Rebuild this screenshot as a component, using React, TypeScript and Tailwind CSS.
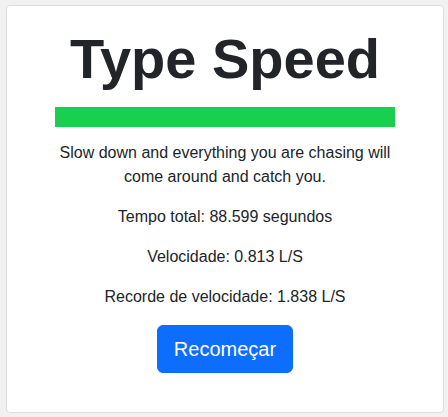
export default function App() {
  return (
    <div className="min-h-[417px] bg-[#f1f1f1] pl-[6px] pr-[4px] pt-[5px] pb-[4px] font-['Liberation_Sans',Arial,sans-serif] text-[#212529]">
      <div className="flex h-[408px] flex-col items-center rounded-[4px] border border-[#dedede] bg-white pt-[19px]">
        <h1 className="text-[56px] font-bold leading-[67px]">Type Speed</h1>
        <div className="mt-[15px] h-[20px] w-[340px] bg-[#19cf50]" />
        <div className="mt-[14px] w-[340px] text-center text-[16px] leading-[24px]">
          <p className="mb-[16px]">
            Slow down and everything you are chasing will come around and catch you.
          </p>
          <p className="mb-[16px]">Tempo total: 88.599 segundos</p>
          <p className="mb-[16px]">Velocidade: 0.813 L/S</p>
          <p className="mb-[16px]">Recorde de velocidade: 1.838 L/S</p>
        </div>
        <button className="rounded-[6px] border border-[#0d6efd] bg-[#0d6efd] px-[16px] py-[8px] text-[20px] leading-[30px] text-white">
          Recomeçar
        </button>
      </div>
    </div>
  );
}
